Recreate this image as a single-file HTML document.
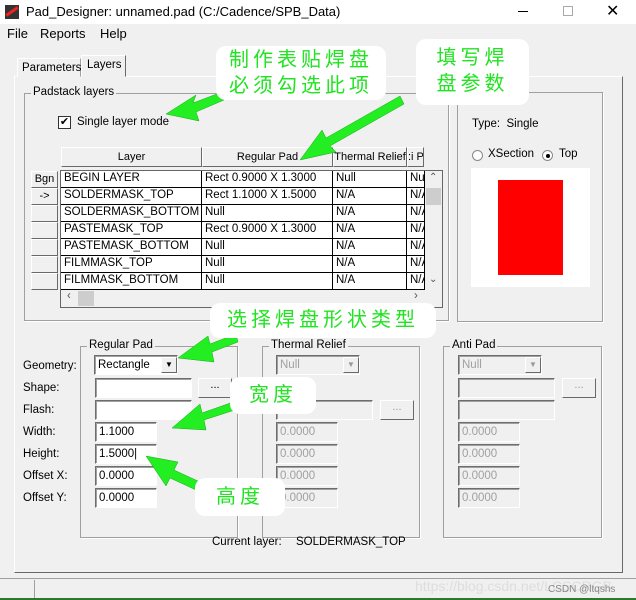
<!DOCTYPE html>
<html><head><meta charset="utf-8"><style>
*{box-sizing:border-box;margin:0;padding:0}
body{width:636px;height:600px;background:#f0f0f0;font-family:"Liberation Sans","Noto Sans CJK SC",sans-serif;font-size:12px;color:#000;position:relative;overflow:hidden}
.a{position:absolute}
.t{position:absolute;white-space:nowrap;font-size:11.5px}
.grp{position:absolute;border:1px solid #a0a0a0;box-shadow:1px 1px 0 #fff}
.lg{position:absolute;background:#f0f0f0;padding:0 2px;top:-8px;font-size:11.5px;white-space:nowrap}
.inp{position:absolute;background:#fff;border:1px solid;border-color:#6d6d6d #fff #fff #6d6d6d;box-shadow:inset 1px 1px 0 #a0a0a0;font-size:11.5px;padding:3px 0 0 3px;height:20px;white-space:nowrap}
.dis{background:#f0f0f0;color:#a0a0a0}
.btn{position:absolute;background:#f0f0f0;border:1px solid;border-color:#fff #696969 #696969 #fff;text-align:center;font-size:11px;white-space:nowrap;overflow:hidden}
.cell{position:absolute;border-right:1px solid #000;border-bottom:1px solid #000;background:#fff;height:17px;padding:1px 0 0 3px;font-size:11.5px;white-space:nowrap;overflow:hidden}
.bub{position:absolute;background:#fff;border-radius:10px;color:#22e322;font-size:20px;letter-spacing:4px;line-height:26px;text-align:center}
</style></head><body>
<div class="a" style="left:0;top:0;width:636px;height:24px;background:#fff"></div>
<div class="a" style="left:5px;top:5px;width:14px;height:14px;background:#333"></div>
<div class="a" style="left:5px;top:10px;width:14px;height:3px;background:#e22;transform:rotate(-35deg)"></div>
<div class="t" style="left:26px;top:4px;font-size:13px">Pad_Designer: unnamed.pad (C:/Cadence/SPB_Data)</div>
<div class="a" style="left:518px;top:11px;width:10px;height:1px;background:#000"></div>
<div class="a" style="left:563px;top:6px;width:10px;height:10px;border:1px solid #aaa"></div>
<div class="t" style="left:606px;top:1px;font-size:16px">✕</div>
<div class="t" style="left:7px;top:26px;font-size:13px">File</div>
<div class="t" style="left:40px;top:26px;font-size:13px">Reports</div>
<div class="t" style="left:100px;top:26px;font-size:13px">Help</div>
<div class="a" style="left:14px;top:76px;width:609px;height:497px;border:1px solid;border-color:#fff #696969 #696969 #fff"></div>
<div class="a" style="left:17px;top:58px;width:64px;height:19px;border:1px solid;border-color:#fff #a0a0a0 #f0f0f0 #fff"></div>
<div class="t" style="left:22px;top:62px">Parameters</div>
<div class="a" style="left:81px;top:55px;width:45px;height:22px;background:#f0f0f0;border:1px solid;border-color:#fff #696969 #f0f0f0 #fff"></div>
<div class="t" style="left:87px;top:59px">Layers</div>
<div class="grp" style="left:24px;top:93px;width:425px;height:228px"><div class="lg" style="left:6px">Padstack layers</div></div>
<div class="a" style="left:58px;top:116px;width:13px;height:13px;background:#fff;border:1px solid #333;font-size:11px;line-height:11px;text-align:center">✔</div>
<div class="t" style="left:77px;top:116px">Single layer mode</div>
<div class="btn" style="left:61px;top:147px;width:141px;height:20px;padding-top:3px">Layer</div>
<div class="btn" style="left:202px;top:147px;width:131px;height:20px;padding-top:3px">Regular Pad</div>
<div class="btn" style="left:333px;top:147px;width:74px;height:20px;padding-top:3px">Thermal Relief</div>
<div class="btn" style="left:407px;top:147px;width:17px;height:20px;padding-top:3px">:i P</div>
<div class="a" style="left:60px;top:170px;width:383px;height:138px;border:1px solid #666;background:#f0f0f0"></div>
<div id="g"></div>
<div class="a" style="left:425px;top:171px;width:17px;height:119px;background:#f0f0f0"></div>
<div class="a" style="left:426px;top:188px;width:15px;height:17px;background:#cdcdcd"></div>
<div class="t" style="left:429px;top:172px;font-size:10px;color:#555">⌃</div>
<div class="t" style="left:429px;top:274px;font-size:10px;color:#555">⌄</div>
<div class="a" style="left:78px;top:291px;width:16px;height:15px;background:#cdcdcd"></div>
<div class="t" style="left:67px;top:290px;color:#555">‹</div>
<div class="t" style="left:414px;top:290px;color:#555">›</div>
<div class="grp" style="left:457px;top:92px;width:146px;height:230px"></div>
<div class="t" style="left:472px;top:118px">Type:&nbsp;&nbsp;Single</div>
<div class="a" style="left:472px;top:150px;width:11px;height:11px;border-radius:50%;background:#fff;border:1px solid #888"></div>
<div class="t" style="left:488px;top:148px">XSection</div>
<div class="a" style="left:542px;top:150px;width:11px;height:11px;border-radius:50%;background:#fff;border:1px solid #888"></div>
<div class="a" style="left:546px;top:154px;width:4px;height:4px;border-radius:50%;background:#000"></div>
<div class="t" style="left:559px;top:148px">Top</div>
<div class="a" style="left:471px;top:168px;width:119px;height:119px;background:#fff"></div>
<div class="a" style="left:498px;top:180px;width:65px;height:95px;background:#f00"></div>
<div class="grp" style="left:80px;top:346px;width:158px;height:192px"><div class="lg" style="left:6px">Regular Pad</div></div>
<div class="grp" style="left:262px;top:346px;width:158px;height:192px"><div class="lg" style="left:6px">Thermal Relief</div></div>
<div class="grp" style="left:443px;top:346px;width:159px;height:192px"><div class="lg" style="left:6px">Anti Pad</div></div>
<div class="t" style="left:23px;top:360px">Geometry:</div>
<div class="t" style="left:23px;top:382px">Shape:</div>
<div class="t" style="left:23px;top:404px">Flash:</div>
<div class="t" style="left:23px;top:426px">Width:</div>
<div class="t" style="left:23px;top:448px">Height:</div>
<div class="t" style="left:23px;top:470px">Offset X:</div>
<div class="t" style="left:23px;top:492px">Offset Y:</div>
<div class="inp" style="left:94px;top:355px;width:84px">Rectangle</div>
<div class="btn" style="left:161px;top:357px;width:16px;height:16px;font-size:8px;line-height:14px">▼</div>
<div class="inp" style="left:95px;top:378px;width:97px"></div>
<div class="btn" style="left:198px;top:378px;width:34px;height:20px">...</div>
<div class="inp" style="left:95px;top:400px;width:97px"></div>
<div class="inp" style="left:95px;top:422px;width:62px">1.1000</div>
<div class="inp" style="left:95px;top:444px;width:62px">1.5000|</div>
<div class="inp" style="left:95px;top:466px;width:62px">0.0000</div>
<div class="inp" style="left:95px;top:488px;width:62px">0.0000</div>
<div class="inp dis" style="left:276px;top:355px;width:84px">Null</div>
<div class="btn" style="left:343px;top:357px;width:16px;height:16px;font-size:8px;line-height:14px;color:#999">▼</div>
<div class="inp dis" style="left:276px;top:400px;width:97px"></div>
<div class="btn" style="left:380px;top:400px;width:34px;height:20px;color:#999">...</div>
<div class="inp dis" style="left:276px;top:422px;width:62px">0.0000</div>
<div class="inp dis" style="left:276px;top:444px;width:62px">0.0000</div>
<div class="inp dis" style="left:276px;top:466px;width:62px">0.0000</div>
<div class="inp dis" style="left:276px;top:488px;width:62px">0.0000</div>
<div class="inp dis" style="left:458px;top:355px;width:84px">Null</div>
<div class="btn" style="left:525px;top:357px;width:16px;height:16px;font-size:8px;line-height:14px;color:#999">▼</div>
<div class="inp dis" style="left:458px;top:378px;width:97px"></div>
<div class="btn" style="left:562px;top:378px;width:34px;height:20px;color:#999">...</div>
<div class="inp dis" style="left:458px;top:400px;width:97px"></div>
<div class="inp dis" style="left:458px;top:422px;width:62px">0.0000</div>
<div class="inp dis" style="left:458px;top:444px;width:62px">0.0000</div>
<div class="inp dis" style="left:458px;top:466px;width:62px">0.0000</div>
<div class="inp dis" style="left:458px;top:488px;width:62px">0.0000</div>
<div class="t" style="left:212px;top:536px">Current layer:</div>
<div class="t" style="left:296px;top:536px">SOLDERMASK_TOP</div>
<div class="a" style="left:0;top:578px;width:636px;height:1px;background:#a0a0a0"></div>
<div class="a" style="left:34px;top:580px;width:1px;height:20px;background:#a0a0a0"></div>
<div class="t" style="left:415px;top:578px;font-size:14px;color:#ddd">https://blog.csdn.net/LCSCRGB</div>
<div class="t" style="left:548px;top:584px;font-size:10px;color:#888">CSDN @ltqshs</div>
<div class="a" style="left:0;top:598px;width:636px;height:2px;background:#2a7a2a"></div>
<svg class="a" style="left:0;top:0" width="636" height="600">
<g fill="#22ee22" stroke="#1aa81a" stroke-width="0.5">
<polygon points="166,114 196,95 193,103 222,92 224,100 196,112 199,121"/>
<polygon points="300,160 322,130 326,138 400,96 404,104 330,146 336,152"/>
<polygon points="178,358 208,336 210,344 236,334 238,342 212,352 214,362"/>
<polygon points="172,428 200,404 202,413 236,401 238,409 204,420 206,430"/>
<polygon points="146,456 178,462 174,470 200,482 196,490 170,478 166,486"/>
</g>
</svg>
<div class="bub" style="left:216px;top:46px;width:170px;height:54px;padding-top:1px">制作表贴焊盘<br>必须勾选此项</div>
<div class="bub" style="left:416px;top:39px;width:113px;height:66px;padding-top:6px">填写焊<br>盘参数</div>
<div class="bub" style="left:210px;top:303px;width:226px;height:35px;padding-top:4px">选择焊盘形状类型</div>
<div class="bub" style="left:230px;top:377px;width:86px;height:37px;padding-top:5px">宽度</div>
<div class="bub" style="left:195px;top:478px;width:90px;height:38px;padding-top:6px">高度</div>
<script>
var rows=[["BEGIN LAYER","Rect 0.9000 X 1.3000","Null","Null"],["SOLDERMASK_TOP","Rect 1.1000 X 1.5000","N/A","N/A"],["SOLDERMASK_BOTTOM","Null","N/A","N/A"],["PASTEMASK_TOP","Rect 0.9000 X 1.3000","N/A","N/A"],["PASTEMASK_BOTTOM","Null","N/A","N/A"],["FILMMASK_TOP","Null","N/A","N/A"],["FILMMASK_BOTTOM","Null","N/A","N/A"]];
var xs=[61,202,333,407],ws=[141,131,74,18],h="";
rows.forEach(function(r,i){var y=171+i*17;
h+='<div class="btn" style="left:31px;top:'+y+'px;width:27px;height:17px;line-height:14px">'+(i==0?"Bgn":i==1?"->":"")+'</div>';
r.forEach(function(c,j){h+='<div class="cell" style="left:'+xs[j]+'px;top:'+y+'px;width:'+ws[j]+'px">'+c+'</div>';});});
document.getElementById("g").innerHTML=h;
</script>
</body></html>
